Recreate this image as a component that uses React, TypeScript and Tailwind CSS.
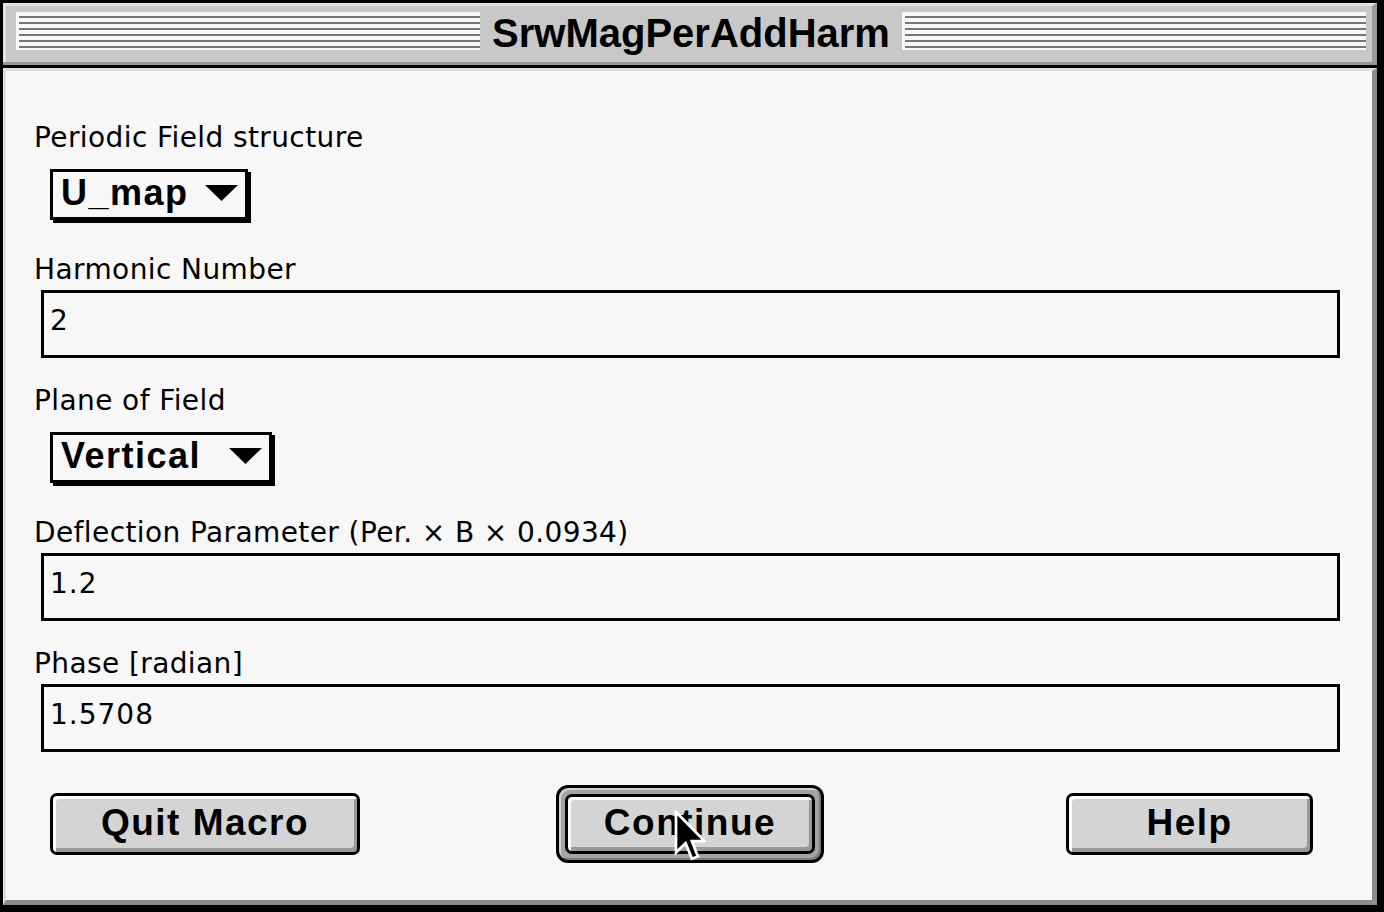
const STRIPES = [0, 1, 2, 3, 4, 5];

const LABEL_FONT = "font-['DejaVu_Sans',sans-serif]";
const SYSTEM_FONT = "font-['Liberation_Sans',Arial,sans-serif] font-bold";

export default function App() {
  return (
    <div className="flex h-[912px] w-[1384px] flex-col bg-black pb-[7px] pl-[3px] pr-[7px] pt-[3px]">
      <TitleBar title="SrwMagPerAddHarm" />
      <div className="h-[3px] bg-[#959595]" />
      <div className="h-[3px] bg-black" />

      <div className="flex flex-1 flex-col border-b-[5px] border-l-[3px] border-r-[5px] border-t-[3px] border-[#dedede] border-b-[#8c8c8c] border-r-[#8c8c8c] bg-[#f7f7f7] text-black">
        <FieldLabel className="mt-[53px]">Periodic Field structure</FieldLabel>
        <PopupMenu className="mt-[17px] w-[198px]" value="U_map" />

        <FieldLabel className="mt-[36px]">Harmonic Number</FieldLabel>
        <TextInput value="2" />

        <FieldLabel className="mt-[29px]">Plane of Field</FieldLabel>
        <PopupMenu className="mt-[17px] w-[222px]" value="Vertical" />

        <FieldLabel className="mt-[36px]">Deflection Parameter (Per. × B × 0.0934)</FieldLabel>
        <TextInput value="1.2" />

        <FieldLabel className="mt-[29px]">Phase [radian]</FieldLabel>
        <TextInput value="1.5708" />

        <div className="mt-[33px] flex items-center">
          <MacButton className="ml-[44px] h-[62px] w-[310px]" label="Quit Macro" />

          <div className="relative ml-[196px] h-[78px] w-[268px] rounded-[12px] border-[3px] border-black bg-[#a3a3a3] p-[6px] shadow-[inset_2px_2px_0_#d2d2d2,inset_-2px_-2px_0_#7a7a7a]">
            <MacButton className="h-full w-full" label="Continue" />
            <ArrowCursor />
          </div>

          <MacButton className="ml-[242px] h-[62px] w-[247px]" label="Help" />
        </div>
      </div>
    </div>
  );
}

function TitleBar({ title }: { title: string }) {
  return (
    <div className="flex h-[59px] items-start border-l-[3px] border-r-[5px] border-t-[3px] border-[#e2e2e2] border-r-[#9a9a9a] bg-[#c8c8c8] pl-[10px] pr-[6px] pt-[6px]">
      <StripeBlock />
      <h1 className={`mt-[1px] px-[12px] text-[40px] leading-[40px] ${SYSTEM_FONT}`}>{title}</h1>
      <StripeBlock />
    </div>
  );
}

function StripeBlock() {
  return (
    <div className="flex h-[38px] flex-1 flex-col gap-[4px] bg-[#f8f8f8] pl-[3px] pt-[4px]">
      {STRIPES.map((line) => (
        <div key={line} className="h-[2px] bg-[#767676]" />
      ))}
    </div>
  );
}

function FieldLabel({ children, className }: { children: React.ReactNode; className: string }) {
  return (
    <p className={`ml-[28px] text-[28px] leading-[28px] tracking-[0.4px] ${LABEL_FONT} ${className}`}>
      {children}
    </p>
  );
}

function PopupMenu({ value, className }: { value: string; className: string }) {
  return (
    <div
      className={`ml-[44px] flex h-[51px] items-start justify-between border-[3px] border-black bg-[#f7f7f7] pl-[8px] pr-[7px] shadow-[3px_3px_0_#000] ${className}`}
    >
      <span className={`pt-[3px] text-[36px] leading-[36px] tracking-[1.5px] ${SYSTEM_FONT}`}>{value}</span>
      <svg className="mt-[13px]" width="33" height="16" viewBox="0 0 33 16">
        <path d="M0 0H33L16.5 16Z" fill="#000" />
      </svg>
    </div>
  );
}

function TextInput({ value }: { value: string }) {
  return (
    <div className="ml-[35px] mt-[6px] h-[68px] w-[1299px] border-[3px] border-black bg-[#f7f7f7] pl-[6px] pt-[14px]">
      <span className={`text-[28px] leading-[28px] tracking-[1px] ${LABEL_FONT}`}>{value}</span>
    </div>
  );
}

function MacButton({ label, className }: { label: string; className: string }) {
  return (
    <div
      className={`flex items-center justify-center rounded-[7px] border-[3px] border-black bg-[#d4d4d4] shadow-[inset_3px_3px_0_#fbfbfb,inset_-3px_-4px_0_#999] ${className}`}
    >
      <span className={`-mt-[4px] text-[37px] leading-[37px] tracking-[1.5px] ${SYSTEM_FONT}`}>{label}</span>
    </div>
  );
}

function ArrowCursor() {
  return (
    <svg
      className="absolute left-[114px] top-[21px]"
      width="33"
      height="54"
      viewBox="0 0 11 18"
    >
      <path
        d="M1 1V14.5L4.2 11.4L6.3 16.6L8.3 15.8L6.3 10.7H10.5Z"
        fill="#000"
        stroke="#fff"
        strokeWidth="0.9"
        strokeLinejoin="miter"
      />
    </svg>
  );
}
